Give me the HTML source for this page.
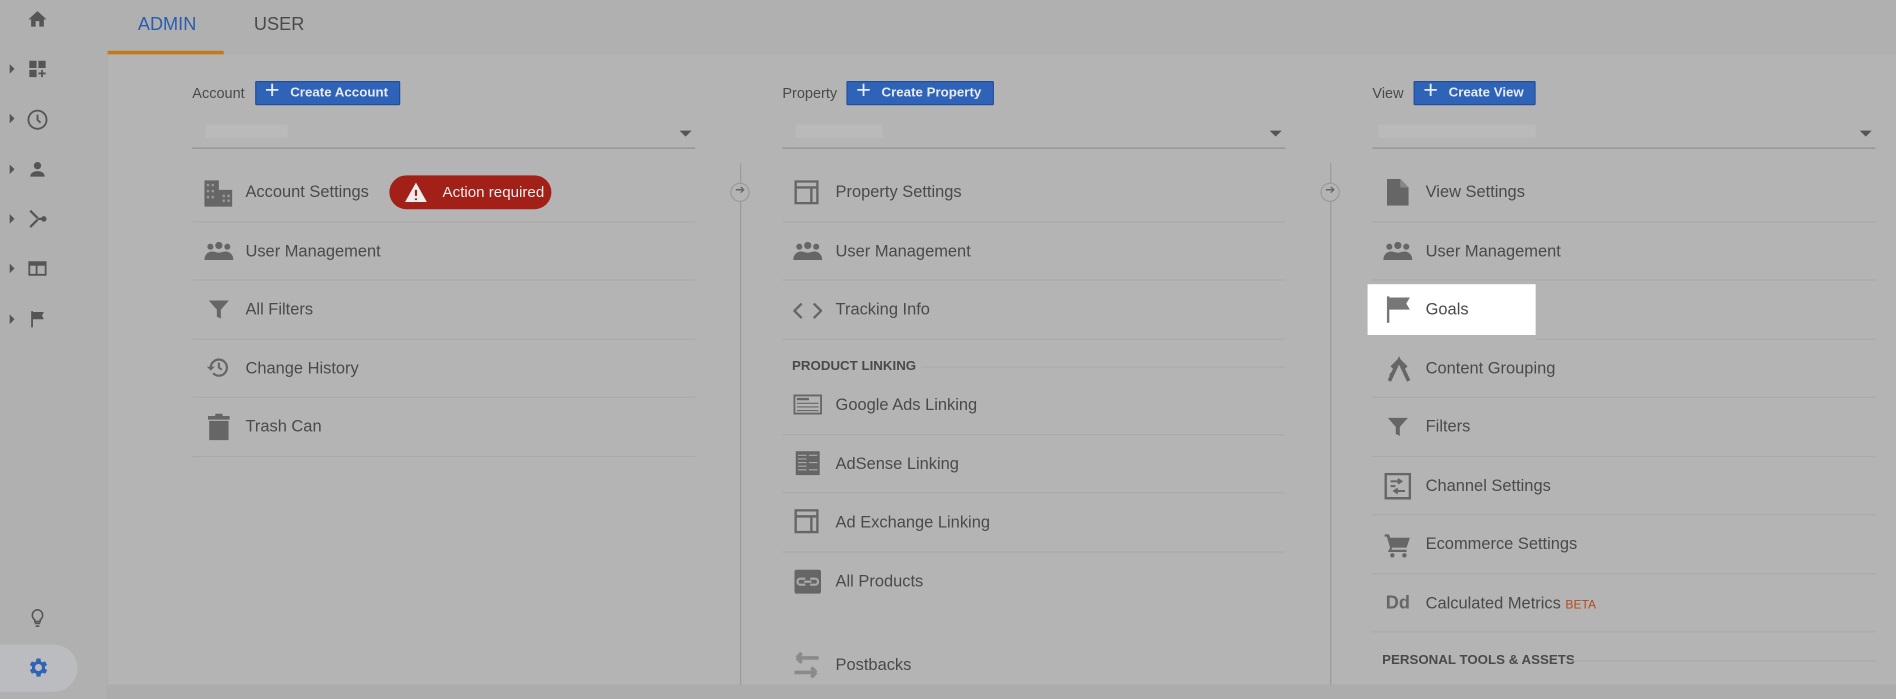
<!DOCTYPE html>
<html><head><meta charset="utf-8"><style>
html,body{margin:0;padding:0;width:1896px;height:699px;overflow:hidden;background:#acacac;}
#s{position:absolute;left:0;top:0;width:1568px;height:578px;transform:scale(1.20918,1.20934);transform-origin:0 0;font-family:"Liberation Sans",sans-serif;color:#4e4e4e;background:#acacac;}
.a{position:absolute;}
.side{left:0;top:0;width:88px;height:578px;background:#b0b0b0;}
.main{left:89px;top:45px;width:1479px;height:521px;background:#b4b4b4;}
.top{left:88px;top:0;width:1480px;height:45px;background:#b0b0b0;}
.tab{font-size:15px;top:12px;}
.lbl{font-size:12px;color:#4a4a4a;}
.btn{height:20px;background:#2f63b8;border:1px solid #244f96;color:#e6ebf5;font-size:11px;font-weight:bold;line-height:19px;padding:0 9px 0 28px;box-sizing:border-box;border-radius:1px;}
.btn:before{content:"+";position:absolute;left:7px;top:-3px;font-size:21px;font-weight:normal;}
.dd{height:1px;background:#8f8f8f;width:416px;}
.blur{height:11px;background:#bababa;}
.car{width:0;height:0;border-left:5px solid transparent;border-right:5px solid transparent;border-top:5px solid #555;}
.row{font-size:13.6px;color:#4a4a4a;}
.sep{height:1px;background:#aaaaaa;width:416px;}
.hd{font-size:11px;font-weight:bold;color:#4a4a4a;}
.vl{width:1px;background:#9a9a9a;}
.circ{width:16px;height:16px;border:1px solid #999;border-radius:50%;box-sizing:border-box;background:#b4b4b4;}
svg.i{position:absolute;}
.sc{width:0;height:0;border-top:4px solid transparent;border-bottom:4px solid transparent;border-left:4px solid #555;}
</style></head><body><div id="s">
<div class="a side"></div><div class="a top"></div><div class="a main"></div>
<div class="a" style="left:0;top:533px;width:64px;height:39px;background:#babcc0;border-radius:0 20px 20px 0"></div>
<svg class="i" style="left:22px;top:7px" width="18" height="18" viewBox="0 0 24 24"><path fill="#555" d="M10 20v-6h4v6h5v-8h3L12 3 2 12h3v8z"/></svg>
<svg class="i" style="left:22px;top:48px" width="18" height="18" viewBox="0 0 24 24"><path fill="#555" d="M3 3h8v8H3zM13 3h8v8h-8zM3 13h8v8H3zM16 13h2v3h3v2h-3v3h-2v-3h-3v-2h3z"/></svg>
<svg class="i" style="left:21px;top:89px" width="20" height="20" viewBox="0 0 24 24"><circle cx="12" cy="12" r="9" fill="none" stroke="#555" stroke-width="1.8"/><path d="M12 7v5l3 3" fill="none" stroke="#555" stroke-width="1.8"/></svg>
<svg class="i" style="left:22px;top:131px" width="18" height="18" viewBox="0 0 24 24"><circle cx="12" cy="8" r="4" fill="#555"/><path fill="#555" d="M4 20c0-4 4-6 8-6s8 2 8 6z"/></svg>
<svg class="i" style="left:22px;top:172px" width="18" height="18" viewBox="0 0 24 24"><path d="M4 3l8 8M4 21l8-8M12 12h6" stroke="#555" stroke-width="2.5" fill="none"/><circle cx="19" cy="12" r="3" fill="#555"/></svg>
<svg class="i" style="left:22px;top:213px" width="18" height="18" viewBox="0 0 24 24"><path fill="#555" d="M2 4h20v16H2zM4 9v9h6V9zm8 0v9h8V9z"/></svg>
<svg class="i" style="left:22px;top:255px" width="18" height="18" viewBox="0 0 24 24"><path fill="#555" d="M5 3h2v18H5zM7 4h12l-2 4 2 4H7z"/></svg>
<div class="a sc" style="left:8px;top:53px"></div><div class="a sc" style="left:8px;top:94px"></div><div class="a sc" style="left:8px;top:136px"></div><div class="a sc" style="left:8px;top:177px"></div><div class="a sc" style="left:8px;top:218px"></div><div class="a sc" style="left:8px;top:260px"></div>
<svg class="i" style="left:22px;top:502px" width="18" height="18" viewBox="0 0 24 24"><path d="M9 18h6M10 21h4M12 3a6 6 0 0 0-3 11v2h6v-2a6 6 0 0 0-3-11z" fill="none" stroke="#555" stroke-width="1.8"/></svg>
<svg class="i" style="left:21px;top:542px" width="20" height="20" viewBox="0 0 24 24"><path fill="#2f63b8" d="M19.4 13a7.5 7.5 0 0 0 0-2l2.1-1.6-2-3.5-2.5 1a7 7 0 0 0-1.7-1L15 3h-4l-.4 2.9a7 7 0 0 0-1.7 1l-2.5-1-2 3.5L6.6 11a7.5 7.5 0 0 0 0 2l-2.1 1.6 2 3.5 2.5-1a7 7 0 0 0 1.7 1L11 21h4l.4-2.9a7 7 0 0 0 1.7-1l2.5 1 2-3.5zM13 15.5a3.5 3.5 0 1 1 0-7 3.5 3.5 0 0 1 0 7z"/></svg>
<div class="a tab" style="left:114px;color:#2a5db0">ADMIN</div>
<div class="a tab" style="left:210px;color:#4a4a4a">USER</div>
<div class="a" style="left:89px;top:42px;width:96px;height:3px;background:#c27a1e"></div>
<div class="a lbl" style="left:159px;top:70px">Account</div>
<div class="a btn" style="left:211px;top:67px">Create Account</div>
<div class="a lbl" style="left:647px;top:70px">Property</div>
<div class="a btn" style="left:700px;top:67px">Create Property</div>
<div class="a lbl" style="left:1135px;top:70px">View</div>
<div class="a btn" style="left:1169px;top:67px">Create View</div>
<div class="a blur" style="left:170px;top:103px;width:68px"></div>
<div class="a blur" style="left:658px;top:103px;width:72px"></div>
<div class="a blur" style="left:1140px;top:103px;width:130px"></div>
<div class="a car" style="left:562px;top:108px"></div><div class="a car" style="left:1050px;top:108px"></div><div class="a car" style="left:1538px;top:108px"></div>
<div class="a dd" style="left:159px;top:122px"></div><div class="a dd" style="left:647px;top:122px"></div><div class="a dd" style="left:1135px;top:122px"></div>
<div class="a vl" style="left:612px;top:135px;height:431px"></div>
<div class="a vl" style="left:1100px;top:135px;height:431px"></div>
<div class="a circ" style="left:604px;top:151px"></div><div class="a" style="left:608px;top:152px;font-size:10px;color:#666">➔</div>
<div class="a circ" style="left:1092px;top:151px"></div><div class="a" style="left:1096px;top:152px;font-size:10px;color:#666">➔</div>
<div class="a" style="left:1131px;top:235px;width:139px;height:42px;background:#fff"></div>
<div class="a row" style="left:203px;top:151px">Account Settings</div>
<div class="a" style="left:322px;top:145px;width:134px;height:28px;background:#a32018;border-radius:14px;color:#eee;font-size:12.5px;line-height:28px;box-sizing:border-box;padding-left:44px;white-space:nowrap">Action required</div>
<svg class="i" style="left:334px;top:150px" width="20" height="18" viewBox="0 0 20 18"><path d="M10 1L19 17H1z" fill="#eee"/><path d="M10 7v5M10 14v1.5" stroke="#a32018" stroke-width="1.8"/></svg>
<div class="a row" style="left:203px;top:200px">User Management</div>
<div class="a row" style="left:203px;top:248px">All Filters</div>
<div class="a row" style="left:203px;top:297px">Change History</div>
<div class="a row" style="left:203px;top:345px">Trash Can</div>
<div class="a sep" style="left:159px;top:183px"></div><div class="a sep" style="left:159px;top:231px"></div><div class="a sep" style="left:159px;top:280px"></div><div class="a sep" style="left:159px;top:328px"></div><div class="a sep" style="left:159px;top:377px"></div>
<svg class="i" style="left:169px;top:149px" width="24" height="22" viewBox="0 0 24 22"><path fill="#666" d="M0 0h12v22H0zM12 8h11v14H12z"/><path fill="#999" d="M2 3h2v2H2zM6 3h2v2H6zM2 8h2v2H2zM6 8h2v2H6zM2 13h2v2H2zM6 13h2v2H6zM15 12h2v2h-2zM19 12h2v2h-2zM15 16h2v2h-2zM19 16h2v2h-2z"/></svg>
<svg class="i" style="left:169px;top:200px" width="24" height="16" viewBox="0 0 24 16"><circle cx="5" cy="4" r="2.5" fill="#666"/><circle cx="12" cy="3" r="3" fill="#666"/><circle cx="19" cy="4" r="2.5" fill="#666"/><path fill="#666" d="M0 15c0-5 4-7 6-7 3 0 4 1 6 1s3-1 6-1c2 0 6 2 6 7z"/></svg>
<svg class="i" style="left:171px;top:246px" width="20" height="20" viewBox="0 0 24 24"><path fill="#666" d="M2 3h20l-8 9v9l-4-2v-7z"/></svg>
<svg class="i" style="left:171px;top:294px" width="20" height="20" viewBox="0 0 24 24"><path d="M4 12a8 8 0 1 1 2.3 5.6" fill="none" stroke="#666" stroke-width="2.2"/><path fill="#666" d="M0 11h8l-4 4z"/><path d="M12 7v5l3 2" fill="none" stroke="#666" stroke-width="2"/></svg>
<svg class="i" style="left:172px;top:342px" width="18" height="22" viewBox="0 0 18 22"><path fill="#666" d="M6 0h6v2h6v3H0V2h6zM1 6h16v16H1z"/></svg>
<div class="a row" style="left:691px;top:151px">Property Settings</div>
<div class="a row" style="left:691px;top:200px">User Management</div>
<div class="a row" style="left:691px;top:248px">Tracking Info</div>
<div class="a hd" style="left:655px;top:297px">PRODUCT LINKING</div>
<div class="a" style="left:762px;top:303px;width:301px;height:1px;background:#aaa"></div>
<div class="a row" style="left:691px;top:327px">Google Ads Linking</div>
<div class="a row" style="left:691px;top:376px">AdSense Linking</div>
<div class="a row" style="left:691px;top:424px">Ad Exchange Linking</div>
<div class="a row" style="left:691px;top:473px">All Products</div>
<div class="a row" style="left:691px;top:542px">Postbacks</div>
<div class="a sep" style="left:647px;top:183px"></div><div class="a sep" style="left:647px;top:231px"></div><div class="a sep" style="left:647px;top:280px"></div><div class="a sep" style="left:647px;top:359px"></div><div class="a sep" style="left:647px;top:407px"></div><div class="a sep" style="left:647px;top:456px"></div>
<svg class="i" style="left:657px;top:149px" width="20" height="20" viewBox="0 0 20 20"><path d="M1 1h18v18H1zM1 6h18M14 6v13" fill="none" stroke="#666" stroke-width="2"/></svg>
<svg class="i" style="left:656px;top:200px" width="24" height="16" viewBox="0 0 24 16"><circle cx="5" cy="4" r="2.5" fill="#666"/><circle cx="12" cy="3" r="3" fill="#666"/><circle cx="19" cy="4" r="2.5" fill="#666"/><path fill="#666" d="M0 15c0-5 4-7 6-7 3 0 4 1 6 1s3-1 6-1c2 0 6 2 6 7z"/></svg>
<svg class="i" style="left:656px;top:250px" width="24" height="14" viewBox="0 0 24 14"><path d="M7 1L1 7l6 6M17 1l6 6-6 6" fill="none" stroke="#666" stroke-width="2"/></svg>
<svg class="i" style="left:656px;top:326px" width="24" height="17" viewBox="0 0 24 17"><path d="M1 1h22v15H1z" fill="none" stroke="#666" stroke-width="1.5"/><path fill="#666" d="M3 3h10v2H3zM3 7h18v1H3zM3 10h18v1H3zM3 13h18v1H3z"/></svg>
<svg class="i" style="left:658px;top:373px" width="20" height="20" viewBox="0 0 20 20"><path fill="#666" d="M0 0h20v20H0z"/><path fill="#aaa" d="M11 3h7v1h-7zM11 9h7v1h-7zM11 15h7v1h-7zM2 3h7v1H2zM2 6h7v1H2zM2 9h7v1H2zM2 12h7v1H2zM2 15h7v1H2z"/></svg>
<svg class="i" style="left:657px;top:421px" width="20" height="20" viewBox="0 0 20 20"><path d="M1 1h18v18H1zM1 6h18M14 6v13" fill="none" stroke="#666" stroke-width="2"/></svg>
<svg class="i" style="left:657px;top:471px" width="22" height="20" viewBox="0 0 22 20"><rect width="22" height="20" rx="2" fill="#666"/><path d="M9 10H5a2.5 2.5 0 0 1 0-5h4M13 10h4a2.5 2.5 0 0 0 0-5h-4M8 7.5h6" transform="translate(0,2.5)" fill="none" stroke="#aaa" stroke-width="1.8"/></svg>
<svg class="i" style="left:653px;top:536px" width="28" height="28" viewBox="0 0 28 28"><path d="M6 8h18M6 8l4-4M6 8l4 4M22 20H4M22 20l-4-4M22 20l-4 4" fill="none" stroke="#8a8a8a" stroke-width="3"/></svg>
<div class="a row" style="left:1179px;top:151px">View Settings</div>
<div class="a row" style="left:1179px;top:200px">User Management</div>
<div class="a row" style="left:1179px;top:248px">Goals</div>
<div class="a row" style="left:1179px;top:297px">Content Grouping</div>
<div class="a row" style="left:1179px;top:345px">Filters</div>
<div class="a row" style="left:1179px;top:394px">Channel Settings</div>
<div class="a row" style="left:1179px;top:442px">Ecommerce Settings</div>
<div class="a row" style="left:1179px;top:491px">Calculated Metrics <span style="font-size:10px;color:#b5481a">BETA</span></div>
<div class="a hd" style="left:1143px;top:540px">PERSONAL TOOLS &amp; ASSETS</div>
<div class="a" style="left:1299px;top:546px;width:252px;height:1px;background:#aaa"></div>
<div class="a sep" style="left:1135px;top:183px"></div><div class="a sep" style="left:1135px;top:231px"></div><div class="a sep" style="left:1270px;top:280px;width:281px"></div><div class="a sep" style="left:1135px;top:328px"></div><div class="a sep" style="left:1135px;top:377px"></div><div class="a sep" style="left:1135px;top:425px"></div><div class="a sep" style="left:1135px;top:474px"></div><div class="a sep" style="left:1135px;top:522px"></div>
<svg class="i" style="left:1147px;top:148px" width="18" height="22" viewBox="0 0 18 22"><path fill="#666" d="M0 0h11l7 7v15H0z"/><path fill="#888" d="M11 0v7h7z"/></svg>
<svg class="i" style="left:1144px;top:200px" width="24" height="16" viewBox="0 0 24 16"><circle cx="5" cy="4" r="2.5" fill="#666"/><circle cx="12" cy="3" r="3" fill="#666"/><circle cx="19" cy="4" r="2.5" fill="#666"/><path fill="#666" d="M0 15c0-5 4-7 6-7 3 0 4 1 6 1s3-1 6-1c2 0 6 2 6 7z"/></svg>
<svg class="i" style="left:1146px;top:245px" width="22" height="22" viewBox="0 0 22 22"><path fill="#777" d="M1 0h2v22H1zM3 1h17l-3 5 3 5H3z"/></svg>
<svg class="i" style="left:1147px;top:294px" width="20" height="22" viewBox="0 0 20 22"><path d="M2 21L10 4l8 17M10 4L4 10M10 4l6 6M6 13l-3 4" fill="none" stroke="#666" stroke-width="3"/></svg>
<svg class="i" style="left:1145px;top:343px" width="22" height="20" viewBox="0 0 24 24"><path fill="#666" d="M2 3h20l-8 9v9l-4-2v-7z"/></svg>
<svg class="i" style="left:1145px;top:391px" width="22" height="22" viewBox="0 0 22 22"><path d="M1 1h20v20H1z" fill="none" stroke="#666" stroke-width="2"/><path d="M5 7h8M11 5l3 2-3 2M17 15H9M11 13l-3 2 3 2M5 11h4" fill="none" stroke="#666" stroke-width="1.6"/></svg>
<svg class="i" style="left:1145px;top:441px" width="22" height="20" viewBox="0 0 24 22"><path fill="#666" d="M0 1h4l1 3h18l-3 9H7l-1 2h14v2H3l2-4L2 3H0z"/><circle cx="7" cy="20" r="2" fill="#666"/><circle cx="18" cy="20" r="2" fill="#666"/></svg>
<div class="a" style="left:1146px;top:490px;font-size:15px;font-weight:bold;color:#666">Dd</div>
</div></body></html>
